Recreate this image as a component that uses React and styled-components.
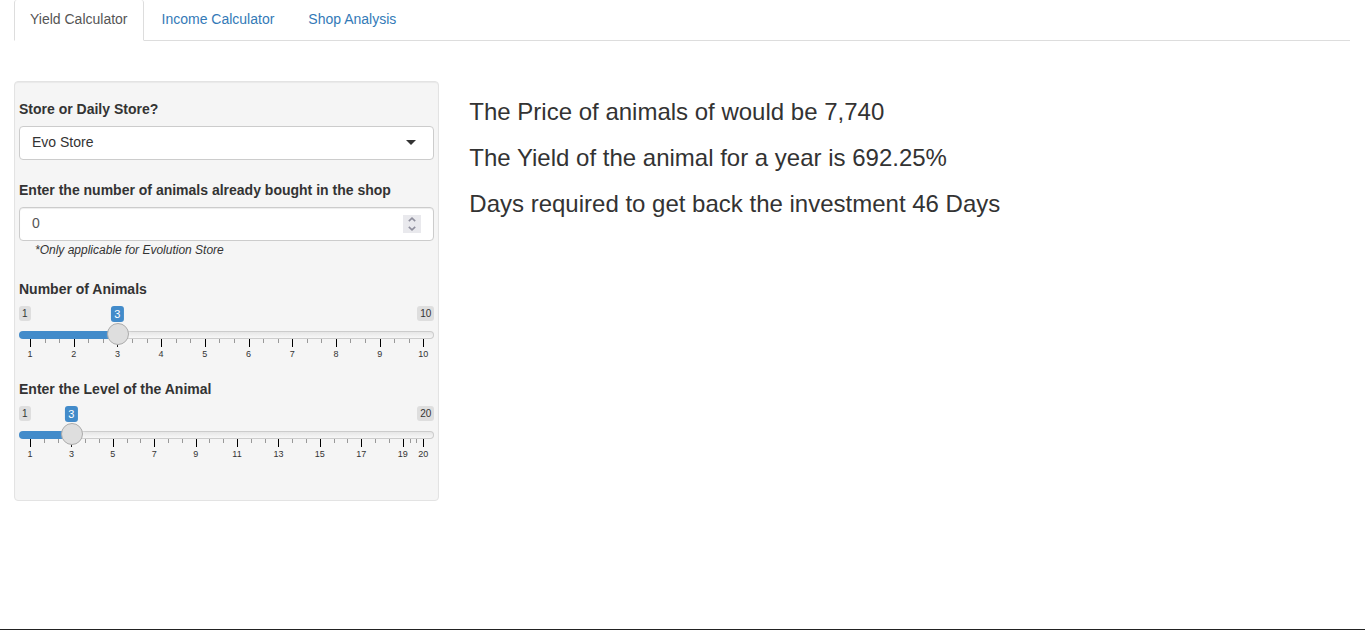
import React, { useState } from "react";
import styled, { createGlobalStyle, css } from "styled-components";

const GlobalStyle = createGlobalStyle`
  *, *::before, *::after { box-sizing: border-box; }
  body {
    margin: 0;
    background: #fff;
    color: #333;
    font-family: "Liberation Sans", Arial, sans-serif;
    font-size: 14px;
    line-height: 20px;
  }
  input, select, button { font: inherit; margin: 0; }
`;

const Page = styled.div`
  min-height: 100vh;
  padding: 0 15px 0 14px;
  border-bottom: 1px solid #222;
`;

const Tabs = styled.nav`
  display: flex;
  gap: 2px;
  border-bottom: 1px solid #ddd;
`;

const Tab = styled.a`
  padding: 9px 15px 11px;
  margin-bottom: -1px;
  border: 1px solid transparent;
  border-top: 0;
  border-radius: 3px 3px 0 0;
  color: #337ab7;
  text-decoration: none;
  ${({ $active }) =>
    $active &&
    css`
      color: #555;
      background: #fff;
      border-color: #ddd #ddd transparent;
    `}
`;

const Row = styled.main`
  display: flex;
  align-items: flex-start;
  margin: 40px -15px 0;
`;

const Column = styled.div`
  width: ${({ $span }) => `calc(100% * ${$span} / 12)`};
  padding: 0 15px;
`;

const Panel = styled.form`
  padding: 17px 4px 41px;
  background: #f5f5f5;
  border: 1px solid #e3e3e3;
  border-radius: 4px;
  box-shadow: inset 0 1px 1px rgba(0, 0, 0, 0.05);
`;

const Field = styled.div`
  & + & {
    margin-top: 20px;
  }
`;

const Label = styled.label`
  display: block;
  margin-bottom: 7px;
  font-weight: 700;
`;

const controlBox = css`
  display: flex;
  align-items: center;
  height: 34px;
  background: #fff;
  border: 1px solid #ccc;
  border-radius: 4px;
`;

const SelectBox = styled.div`
  ${controlBox}
  position: relative;

  &::after {
    content: "";
    position: absolute;
    right: 17px;
    top: 13px;
    border: 5px solid transparent;
    border-top-color: #333;
    border-bottom: 0;
    pointer-events: none;
  }
`;

const Select = styled.select`
  flex: 1;
  height: 100%;
  padding: 0 32px 2px 12px;
  appearance: none;
  border: 0;
  border-radius: 4px;
  background: transparent;
  color: #333;
`;

const NumberBox = styled.div`
  ${controlBox}
  padding-right: 12px;
  box-shadow: inset 0 1px 1px rgba(0, 0, 0, 0.075);
`;

const NumberInput = styled.input`
  flex: 1;
  min-width: 0;
  height: 100%;
  padding: 0 12px 2px;
  border: 0;
  background: transparent;
  color: #555;
  appearance: textfield;

  &::-webkit-inner-spin-button {
    appearance: none;
    margin: 0;
  }
`;

const Spinner = styled.div`
  display: flex;
  flex-direction: column;
  width: 18px;
  height: 18px;
  background: #e9e9ed;
`;

const StepButton = styled.button`
  display: flex;
  flex: 1;
  align-items: center;
  justify-content: center;
  min-height: 0;
  padding: 0;
  border: 0;
  background: transparent;
`;

const Note = styled.p`
  margin: 0 16px;
  font-size: 12px;
  font-style: italic;
  line-height: 18px;
`;

const Badges = styled.div`
  position: relative;
  display: flex;
  justify-content: space-between;
  align-items: flex-start;
  height: 17px;
`;

const Limit = styled.span`
  padding: 1px 3px;
  border-radius: 3px;
  background: #dedede;
  font-size: 10px;
  line-height: 13px;
`;

const Current = styled.output`
  position: absolute;
  top: 0;
  padding: 0 3px;
  border-radius: 3px;
  background: #428bca;
  color: #fff;
  font-size: 11px;
  line-height: 16px;
  transform: translateX(-50%);
`;

const Range = styled.input`
  position: relative;
  display: block;
  width: 100%;
  height: 24px;
  appearance: none;
  background: transparent;

  &::-webkit-slider-runnable-track {
    height: 8px;
    border: 1px solid transparent;
    border-radius: 8px;
    background:
      linear-gradient(#428bca, #428bca) 0 0 / var(--fill) 100% no-repeat border-box,
      linear-gradient(#dedede -50%, #fff 150%) padding-box,
      linear-gradient(#ccc, #ccc) border-box;
  }

  &::-webkit-slider-thumb {
    appearance: none;
    width: 22px;
    height: 22px;
    margin-top: -9px;
    border: 1px solid #ababab;
    border-radius: 50%;
    background: #dedede;
    box-shadow: 1px 1px 3px rgba(255, 255, 255, 0.3);
  }
`;

const Scale = styled.div`
  display: flex;
  margin-top: -8px;
  padding: 0 11px;
`;

const Segment = styled.div`
  flex: ${({ $span }) => $span} 0 0;
  min-width: 0;
`;

const Ticks = styled.div`
  display: flex;
  height: 11px;
`;

const Tick = styled.span`
  flex: 1;
  height: ${({ $major }) => ($major ? 8 : 4)}px;
  border-left: 1px solid ${({ $major }) => ($major ? "#000" : "#999")};
`;

const TickLabel = styled.div`
  display: flex;
  justify-content: center;
  width: 0;
  font-size: 9px;
  line-height: 9px;
`;

const Results = styled.section`
  display: flex;
  flex-direction: column;
  gap: 20px;
  padding-top: 18px;
`;

const Result = styled.h3`
  margin: 0;
  font-size: 24px;
  font-weight: 400;
  line-height: 26px;
`;

function Chevron({ down }) {
  return (
    <svg width="8" height="5" viewBox="0 0 8 5" aria-hidden="true">
      <path
        d={down ? "M0.8 0.8 4 3.8 7.2 0.8" : "M0.8 4.2 4 1.2 7.2 4.2"}
        fill="none"
        stroke="#8f8f9d"
        strokeWidth="1.6"
      />
    </svg>
  );
}

function Slider({ id, label, max, step, initial }) {
  const [value, setValue] = useState(initial);
  const ratio = (value - 1) / (max - 1);
  const center = `calc(11px + (100% - 22px) * ${ratio})`;

  const stops = [];
  for (let n = 1; n < max; n += step) stops.push(n);
  stops.push(max);

  return (
    <Field>
      <Label htmlFor={id}>{label}</Label>
      <Badges>
        <Limit>1</Limit>
        <Current htmlFor={id} style={{ left: center }}>{value}</Current>
        <Limit>{max}</Limit>
      </Badges>
      <Range
        id={id}
        type="range"
        min={1}
        max={max}
        value={value}
        onChange={(e) => setValue(Number(e.target.value))}
        style={{ "--fill": center }}
      />
      <Scale aria-hidden="true">
        {stops.map((n, i) => {
          const last = i === stops.length - 1;
          return (
            <Segment key={n} $span={last ? 0 : stops[i + 1] - n}>
              <Ticks>
                <Tick $major />
                {!last && <Tick />}
                {!last && <Tick />}
              </Ticks>
              <TickLabel>{n}</TickLabel>
            </Segment>
          );
        })}
      </Scale>
    </Field>
  );
}

export default function App() {
  const [bought, setBought] = useState(0);

  return (
    <>
      <GlobalStyle />
      <Page>
        <Tabs>
          <Tab href="#yield" $active aria-current="page">Yield Calculator</Tab>
          <Tab href="#income">Income Calculator</Tab>
          <Tab href="#shop">Shop Analysis</Tab>
        </Tabs>
        <Row>
          <Column $span={4}>
            <Panel>
              <Field>
                <Label htmlFor="store">Store or Daily Store?</Label>
                <SelectBox>
                  <Select id="store" defaultValue="evo">
                    <option value="evo">Evo Store</option>
                  </Select>
                </SelectBox>
              </Field>
              <Field>
                <Label htmlFor="bought">Enter the number of animals already bought in the shop</Label>
                <NumberBox>
                  <NumberInput
                    id="bought"
                    type="number"
                    min={0}
                    value={bought}
                    onChange={(e) => setBought(Number(e.target.value))}
                  />
                  <Spinner>
                    <StepButton type="button" aria-label="Increase" onClick={() => setBought(bought + 1)}>
                      <Chevron />
                    </StepButton>
                    <StepButton type="button" aria-label="Decrease" onClick={() => setBought(Math.max(0, bought - 1))}>
                      <Chevron down />
                    </StepButton>
                  </Spinner>
                </NumberBox>
                <Note>*Only applicable for Evolution Store</Note>
              </Field>
              <Slider id="animals" label="Number of Animals" max={10} step={1} initial={3} />
              <Slider id="level" label="Enter the Level of the Animal" max={20} step={2} initial={3} />
            </Panel>
          </Column>
          <Column $span={8}>
            <Results>
              <Result>The Price of animals of would be 7,740</Result>
              <Result>The Yield of the animal for a year is 692.25%</Result>
              <Result>Days required to get back the investment 46 Days</Result>
            </Results>
          </Column>
        </Row>
      </Page>
    </>
  );
}
